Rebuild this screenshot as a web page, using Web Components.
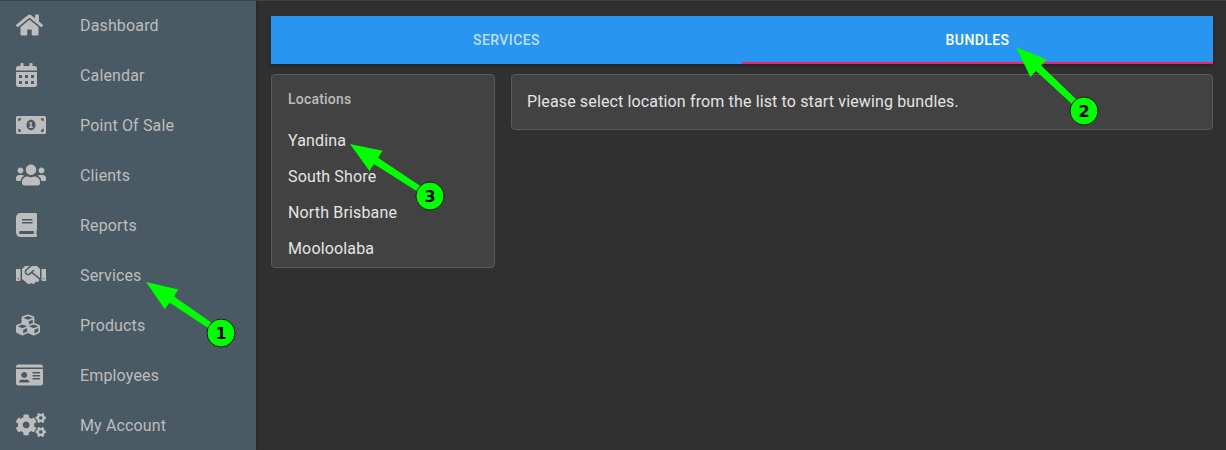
<!DOCTYPE html>
<html>
<head>
<meta charset="utf-8">
<title>Bundles</title>
<style>
  html, body { margin: 0; height: 100%; background: #303030; overflow: hidden; }
  body { font-family: Roboto, "Liberation Sans", sans-serif; }
</style>
</head>
<body>
<app-shell>
  <side-nav slot="nav">
    <nav-item icon="home">Dashboard</nav-item>
    <nav-item icon="calendar">Calendar</nav-item>
    <nav-item icon="money">Point Of Sale</nav-item>
    <nav-item icon="users">Clients</nav-item>
    <nav-item icon="book">Reports</nav-item>
    <nav-item icon="handshake">Services</nav-item>
    <nav-item icon="cubes">Products</nav-item>
    <nav-item icon="idcard">Employees</nav-item>
    <nav-item icon="cogs">My Account</nav-item>
  </side-nav>
  <tab-bar>
    <tab-item>SERVICES</tab-item>
    <tab-item active>BUNDLES</tab-item>
  </tab-bar>
  <div style="display:flex;gap:16px;align-items:flex-start">
    <location-list heading="Locations">
      <location-item>Yandina</location-item>
      <location-item>South Shore</location-item>
      <location-item>North Brisbane</location-item>
      <location-item>Mooloolaba</location-item>
    </location-list>
    <info-card>Please select location from the list to start viewing bundles.</info-card>
  </div>
</app-shell>
<note-arrow tip="146,282" end="221,333" label="1"></note-arrow>
<note-arrow tip="1016,47" end="1084,111" label="2"></note-arrow>
<note-arrow tip="350,144" end="430,196" label="3"></note-arrow>

<script>
const ICONS = {
    home: [576, 'M280.37 148.26L96 300.11V464a16 16 0 0 0 16 16l112.06-.29a16 16 0 0 0 15.92-16V368a16 16 0 0 1 16-16h64a16 16 0 0 1 16 16v95.64a16 16 0 0 0 16 16.05L464 480a16 16 0 0 0 16-16V300L295.67 148.26a12.19 12.19 0 0 0-15.3 0zM571.6 251.47L488 182.56V44.05a12 12 0 0 0-12-12h-56a12 12 0 0 0-12 12v72.61L318.47 43a48 48 0 0 0-61 0L4.34 251.47a12 12 0 0 0-1.6 16.9l25.5 31A12 12 0 0 0 45.15 301l235.22-193.74a12.19 12.19 0 0 1 15.3 0L530.9 301a12 12 0 0 0 16.9-1.6l25.5-31a12 12 0 0 0-1.7-16.93z'],
    calendar: [448, 'M0 464c0 26.5 21.5 48 48 48h352c26.5 0 48-21.5 48-48V192H0v272zm320-196c0-6.6 5.4-12 12-12h40c6.6 0 12 5.4 12 12v40c0 6.6-5.4 12-12 12h-40c-6.6 0-12-5.4-12-12v-40zm0 128c0-6.6 5.4-12 12-12h40c6.6 0 12 5.4 12 12v40c0 6.6-5.4 12-12 12h-40c-6.6 0-12-5.4-12-12v-40zM192 268c0-6.6 5.4-12 12-12h40c6.6 0 12 5.4 12 12v40c0 6.6-5.4 12-12 12h-40c-6.6 0-12-5.4-12-12v-40zm0 128c0-6.6 5.4-12 12-12h40c6.6 0 12 5.4 12 12v40c0 6.6-5.4 12-12 12h-40c-6.6 0-12-5.4-12-12v-40zM64 268c0-6.6 5.4-12 12-12h40c6.6 0 12 5.4 12 12v40c0 6.6-5.4 12-12 12H76c-6.6 0-12-5.4-12-12v-40zm0 128c0-6.6 5.4-12 12-12h40c6.6 0 12 5.4 12 12v40c0 6.6-5.4 12-12 12H76c-6.6 0-12-5.4-12-12v-40zM400 64h-48V16c0-8.8-7.2-16-16-16h-32c-8.8 0-16 7.2-16 16v48H160V16c0-8.8-7.2-16-16-16h-32c-8.8 0-16 7.2-16 16v48H48C21.5 64 0 85.5 0 112v48h448v-48c0-26.5-21.5-48-48-48z'],
    money: [640, 'M352 288h-16v-88c0-4.42-3.58-8-8-8h-13.58c-4.74 0-9.37 1.4-13.31 4.03l-15.33 10.22a7.994 7.994 0 0 0-2.22 11.09l8.88 13.31a7.994 7.994 0 0 0 11.09 2.22l.47-.31V288h-16c-4.42 0-8 3.58-8 8v16c0 4.42 3.58 8 8 8h64c4.42 0 8-3.58 8-8v-16c0-4.42-3.58-8-8-8zM608 64H32C14.33 64 0 78.33 0 96v320c0 17.67 14.33 32 32 32h576c17.67 0 32-14.33 32-32V96c0-17.67-14.33-32-32-32zM48 400v-64c35.35 0 64 28.65 64 64H48zm0-224v-64h64c0 35.35-28.65 64-64 64zm272 192c-53 0-96-50.15-96-112 0-61.86 43-112 96-112s96 50.14 96 112c0 61.87-43.01 112-96 112zm272 32h-64c0-35.35 28.65-64 64-64v64zm0-224c-35.35 0-64-28.65-64-64h64v64z'],
    users: [640, 'M96 224c35.3 0 64-28.7 64-64s-28.7-64-64-64-64 28.7-64 64 28.7 64 64 64zm448 0c35.3 0 64-28.7 64-64s-28.7-64-64-64-64 28.7-64 64 28.7 64 64 64zm32 32h-64c-17.6 0-33.5 7.1-45.1 18.6 40.3 22.1 68.9 62 75.1 109.4h66c17.7 0 32-14.3 32-32v-32c0-35.3-28.7-64-64-64zm-256 0c61.9 0 112-50.1 112-112S381.9 32 320 32 208 82.1 208 144s50.1 112 112 112zm76.8 32h-8.3c-20.8 10-43.9 16-68.5 16s-47.6-6-68.5-16h-8.3C179.6 288 128 339.6 128 403.2V432c0 26.5 21.5 48 48 48h288c26.5 0 48-21.5 48-48v-28.8c0-63.6-51.6-115.2-115.2-115.2zm-223.7-13.4C161.5 263.1 145.6 256 128 256H64c-35.3 0-64 28.7-64 64v32c0 17.7 14.3 32 32 32h65.9c6.3-47.4 34.9-87.3 75.2-109.4z'],
    book: [448, 'M448 360V24c0-13.3-10.7-24-24-24H96C43 0 0 43 0 96v320c0 53 43 96 96 96h328c13.3 0 24-10.7 24-24v-16c0-7.5-3.5-14.3-8.9-18.7-4.2-15.4-4.2-59.3 0-74.7 5.4-4.3 8.9-11.1 8.9-18.6zM128 134c0-3.3 2.7-6 6-6h212c3.3 0 6 2.7 6 6v20c0 3.3-2.7 6-6 6H134c-3.3 0-6-2.7-6-6v-20zm0 64c0-3.3 2.7-6 6-6h212c3.3 0 6 2.7 6 6v20c0 3.3-2.7 6-6 6H134c-3.3 0-6-2.7-6-6v-20zm253.4 250H96c-17.7 0-32-14.3-32-32 0-17.6 14.4-32 32-32h285.4c-1.9 17.1-1.9 46.9 0 64z'],
    handshake: [640, 'M434.7 64h-85.9c-8 0-15.7 3-21.6 8.4l-98.3 90c-.1.1-.2.3-.3.4-16.6 15.6-16.3 40.5-2.1 56 12.7 13.9 39.4 17.6 56.1 2.7.1-.1.3-.1.4-.2l79.9-73.2c6.5-5.9 16.7-5.5 22.6 1 6 6.5 5.5 16.6-1 22.6l-26.1 23.9L504 313.8c2.9 2.4 5.5 5 7.9 7.7V128l-54.6-54.6c-5.9-6-14.1-9.4-22.6-9.4zM544 128.2v223.9c0 17.7 14.3 32 32 32h64V128.2h-96zm48 223.9c-8.8 0-16-7.2-16-16s7.2-16 16-16 16 7.2 16 16-7.2 16-16 16zM0 384h64c17.7 0 32-14.3 32-32V128.2H0V384zm48-63.9c8.8 0 16 7.2 16 16s-7.2 16-16 16-16-7.2-16-16c0-8.9 7.2-16 16-16zm435.9 18.6L334.6 217.5l-30 27.5c-29.7 27.1-75.2 24.5-101.7-4.4-26.9-29.4-24.8-74.9 4.4-101.7L289.1 64h-83.8c-8.5 0-16.6 3.4-22.6 9.4L128 128v223.9h18.3l90.5 81.9c27.4 22.3 67.7 18.1 90-9.3l.2-.2 17.9 15.5c15.9 13 39.4 10.5 52.3-5.4l31.4-38.6 5.4 4.4c13.7 11.1 33.9 9.1 45-4.7l9.5-11.7c11.2-13.8 9.1-33.9-4.6-45.1z'],
    cubes: [512, 'M488.6 250.2L392 214V105.5c0-15-9.3-28.4-23.4-33.7l-100-37.5c-8.1-3.1-17.1-3.1-25.3 0l-100 37.5c-14.1 5.3-23.4 18.7-23.4 33.7V214l-96.6 36.2C9.3 255.5 0 268.9 0 283.9V394c0 13.6 7.7 26.1 19.9 32.2l100 50c10.1 5.1 22.1 5.1 32.2 0l103.9-52 103.9 52c10.1 5.1 22.1 5.1 32.2 0l100-50c12.2-6.1 19.9-18.6 19.9-32.2V283.9c0-15-9.3-28.4-23.4-33.7zM358 214.8l-85 31.9v-68.2l85-37v73.3zM154 104.1l102-38.2 102 38.2v.6l-102 41.4-102-41.4v-.6zm84 291.1l-85 42.5v-79.1l85-38.8v75.4zm0-112l-102 41.4-102-41.4v-.6l102-38.2 102 38.2v.6zm240 112l-85 42.5v-79.1l85-38.8v75.4zm0-112l-102 41.4-102-41.4v-.6l102-38.2 102 38.2v.6z'],
    idcard: [576, 'M528 32H48C21.5 32 0 53.5 0 80v16h576V80c0-26.5-21.5-48-48-48zM0 432c0 26.5 21.5 48 48 48h480c26.5 0 48-21.5 48-48V128H0v304zm352-232c0-4.4 3.6-8 8-8h144c4.4 0 8 3.6 8 8v16c0 4.4-3.6 8-8 8H360c-4.4 0-8-3.6-8-8v-16zm0 64c0-4.4 3.6-8 8-8h144c4.4 0 8 3.6 8 8v16c0 4.4-3.6 8-8 8H360c-4.4 0-8-3.6-8-8v-16zm0 64c0-4.4 3.6-8 8-8h144c4.4 0 8 3.6 8 8v16c0 4.4-3.6 8-8 8H360c-4.4 0-8-3.6-8-8v-16zM176 192c35.3 0 64 28.7 64 64s-28.7 64-64 64-64-28.7-64-64 28.7-64 64-64zM67.1 396.2C75.5 370.5 99.6 352 128 352h8.2c12.3 5.1 25.7 8 39.8 8s27.6-2.9 39.8-8h8.2c28.4 0 52.5 18.5 60.9 44.2 3.2 9.9-5.2 19.8-15.6 19.8H82.7c-10.4 0-18.8-10-15.6-19.8z'],
    cogs: [640, 'M512.1 191l-8.2 14.3c-3 5.3-9.4 7.5-15.1 5.4-11.8-4.4-22.6-10.7-32.1-18.6-4.6-3.8-5.8-10.5-2.8-15.7l8.2-14.3c-6.9-8-12.3-17.3-15.9-27.4h-16.5c-6 0-11.2-4.3-12.2-10.3-2-12-2.1-24.6 0-37.1 1-6 6.2-10.4 12.2-10.4h16.5c3.6-10.1 9-19.4 15.9-27.4l-8.2-14.3c-3-5.2-1.9-11.9 2.8-15.7 9.5-7.9 20.4-14.2 32.1-18.6 5.7-2.1 12.1.1 15.1 5.4l8.2 14.3c10.5-1.9 21.2-1.9 31.7 0L552 6.3c3-5.3 9.4-7.5 15.1-5.4 11.8 4.4 22.6 10.7 32.1 18.6 4.6 3.8 5.8 10.5 2.8 15.7l-8.2 14.3c6.9 8 12.3 17.3 15.9 27.4h16.5c6 0 11.2 4.3 12.2 10.3 2 12 2.1 24.6 0 37.1-1 6-6.2 10.4-12.2 10.4h-16.5c-3.6 10.1-9 19.4-15.9 27.4l8.2 14.3c3 5.2 1.9 11.9-2.8 15.7-9.5 7.9-20.4 14.2-32.1 18.6-5.7 2.1-12.1-.1-15.1-5.4l-8.2-14.3c-10.4 1.9-21.2 1.9-31.7 0zm-10.5-58.8c38.5 29.6 82.4-14.3 52.8-52.8-38.5-29.7-82.4 14.3-52.8 52.8zM386.3 286.1l33.7 16.8c10.1 5.8 14.5 18.1 10.5 29.1-8.9 24.2-26.4 46.4-42.6 65.8-7.4 8.9-20.2 11.1-30.3 5.3l-29.1-16.8c-16 13.7-34.6 24.6-54.9 31.7v33.6c0 11.6-8.3 21.6-19.7 23.6-24.6 4.2-50.4 4.4-75.9 0-11.5-2-20-11.9-20-23.6V418c-20.3-7.2-38.9-18-54.9-31.7L74 403c-10 5.8-22.9 3.6-30.3-5.3-16.2-19.4-33.3-41.6-42.2-65.7-4-10.9.4-23.2 10.5-29.1l33.3-16.8c-3.9-20.9-3.9-42.4 0-63.4L12 205.8c-10.1-5.8-14.6-18.1-10.5-29 8.9-24.2 26-46.4 42.2-65.8 7.4-8.9 20.2-11.1 30.3-5.3l29.1 16.8c16-13.7 34.6-24.6 54.9-31.7V57.1c0-11.5 8.2-21.5 19.6-23.5 24.6-4.2 50.5-4.4 76-.1 11.5 2 20 11.9 20 23.6v33.6c20.3 7.2 38.9 18 54.9 31.7l29.1-16.8c10-5.8 22.9-3.6 30.3 5.3 16.2 19.4 33.2 41.6 42.1 65.8 4 10.9.1 23.2-10 29.1l-33.7 16.8c3.9 21 3.9 42.5 0 63.5zm-117.6 21.1c59.2-77-28.7-164.9-105.7-105.7-59.2 77 28.7 164.9 105.7 105.7zm243.4 182.7l-8.2 14.3c-3 5.3-9.4 7.5-15.1 5.4-11.8-4.4-22.6-10.7-32.1-18.6-4.6-3.8-5.8-10.5-2.8-15.7l8.2-14.3c-6.9-8-12.3-17.3-15.9-27.4h-16.5c-6 0-11.2-4.3-12.2-10.3-2-12-2.1-24.6 0-37.1 1-6 6.2-10.4 12.2-10.4h16.5c3.6-10.1 9-19.4 15.9-27.4l-8.2-14.3c-3-5.2-1.9-11.9 2.8-15.7 9.5-7.9 20.4-14.2 32.1-18.6 5.7-2.1 12.1.1 15.1 5.4l8.2 14.3c10.5-1.9 21.2-1.9 31.7 0l8.2-14.3c3-5.3 9.4-7.5 15.1-5.4 11.8 4.4 22.6 10.7 32.1 18.6 4.6 3.8 5.8 10.5 2.8 15.7l-8.2 14.3c6.9 8 12.3 17.3 15.9 27.4h16.5c6 0 11.2 4.3 12.2 10.3 2 12 2.1 24.6 0 37.1-1 6-6.2 10.4-12.2 10.4h-16.5c-3.6 10.1-9 19.4-15.9 27.4l8.2 14.3c3 5.2 1.9 11.9-2.8 15.7-9.5 7.9-20.4 14.2-32.1 18.6-5.7 2.1-12.1-.1-15.1-5.4l-8.2-14.3c-10.4 1.9-21.2 1.9-31.7 0zM501.6 431c38.5 29.6 82.4-14.3 52.8-52.8-38.5-29.6-82.4 14.3-52.8 52.8z']
}

class AppShell extends HTMLElement {
    constructor() {
        super()
        this.attachShadow({ mode: 'open' }).innerHTML = `<style>
      :host { display: flex; height: 450px; position: relative; }
      :host::before { content: ''; position: absolute; left: 0; right: 0; top: 0; height: 1px; background: #3a4249; z-index: 1; }
      main { flex: 1; min-width: 0; display: flex; flex-direction: column; gap: 10px; padding: 16px 13px 0 15px; }
    </style>
    <slot name="nav"></slot>
    <main><slot></slot></main>`
    }
}

class SideNav extends HTMLElement {
    constructor() {
        super()
        this.attachShadow({ mode: 'open' }).innerHTML = `<style>
      :host { display: block; width: 256px; flex: none; background: #4a5a64; box-shadow: 0 0 4px rgba(0,0,0,.4); }
    </style>
    <slot></slot>`
    }
}

class NavItem extends HTMLElement {
    constructor() {
        super()
        const [w, d] = ICONS[this.getAttribute('icon')]
        this.attachShadow({ mode: 'open' }).innerHTML = `<style>
      :host { display: flex; align-items: center; height: 50px; padding-left: 16px; color: #bdbdbd; font-size: 16px; letter-spacing: .15px; }
      .icon { width: 64px; flex: none; display: flex; }
      svg { height: 24px; fill: currentColor; }
    </style>
    <span class="icon"><svg viewBox="0 0 ${w} 512"><path d="${d}"/></svg></span>
    <slot></slot>`
    }
}

class TabBar extends HTMLElement {
    constructor() {
        super()
        this.attachShadow({ mode: 'open' }).innerHTML = `<style>
      :host { display: flex; height: 48px; background: #2896f0; box-shadow: 0 2px 4px rgba(0,0,0,.3); }
    </style>
    <slot></slot>`
    }
}

class TabItem extends HTMLElement {
    constructor() {
        super()
        this.attachShadow({ mode: 'open' }).innerHTML = `<style>
      :host { flex: 1; display: flex; align-items: center; justify-content: center; box-sizing: border-box;
        font-size: 14px; font-weight: 500; letter-spacing: .4px; color: rgba(255,255,255,.7); }
      :host([active]) { color: #fff; box-shadow: inset 0 -2px 0 #f0246c; }
    </style>
    <slot></slot>`
    }
}

class LocationList extends HTMLElement {
    constructor() {
        super()
        this.attachShadow({ mode: 'open' }).innerHTML = `<style>
      :host { display: block; box-sizing: border-box; width: 224px; height: 194px; flex: none; padding: 0 16px;
        background: #424242; border: 1px solid #5a5a5a; border-radius: 4px; }
      h2 { margin: 0; padding: 16px 0 16px; font-size: 14px; line-height: 16px; font-weight: 500; letter-spacing: .2px; color: #bdbdbd; }
    </style>
    <h2>${this.getAttribute('heading')}</h2>
    <slot></slot>`
    }
}

class LocationItem extends HTMLElement {
    constructor() {
        super()
        this.attachShadow({ mode: 'open' }).innerHTML = `<style>
      :host { display: block; height: 36px; line-height: 36px; font-size: 16px; letter-spacing: .15px; color: #e4e4e4; }
    </style>
    <slot></slot>`
    }
}

class InfoCard extends HTMLElement {
    constructor() {
        super()
        this.attachShadow({ mode: 'open' }).innerHTML = `<style>
      :host { flex: 1; display: flex; align-items: center; box-sizing: border-box; height: 56px; padding: 0 15px 2px;
        background: #424242; border: 1px solid #5a5a5a; border-radius: 4px; font-size: 16px; letter-spacing: .14px; color: #e4e4e4; }
    </style>
    <slot></slot>`
    }
}

class NoteArrow extends HTMLElement {
    constructor() {
        super()
        const [tx, ty] = this.getAttribute('tip').split(',').map(Number)
        const [ex, ey] = this.getAttribute('end').split(',').map(Number)
        const len = Math.hypot(ex - tx, ey - ty)
        const ux = (ex - tx) / len
        const uy = (ey - ty) / len
        // point at distance a along the arrow and b to the side of it
        const pt = (a, b) => `${tx + ux * a - uy * b},${ty + uy * a + ux * b}`
        const points = [pt(0, 0), pt(31, 12), pt(31, 3.75), pt(len, 3), pt(len, -3), pt(31, -3.75), pt(31, -12)].join(' ')
        this.attachShadow({ mode: 'open' }).innerHTML = `<style>
      :host { position: absolute; left: 0; top: 0; width: 1226px; height: 450px; pointer-events: none; }
      svg { display: block; }
      text { font: bold 16px "DejaVu Sans", sans-serif; text-anchor: middle; }
    </style>
    <svg width="1226" height="450">
      <polygon points="${points}" fill="#00ff00"/>
      <circle cx="${ex}" cy="${ey}" r="14" fill="#00ff00" stroke="#1a1a1a"/>
      <text x="${ex}" y="${ey + 5.8}" fill="#000">${this.getAttribute('label')}</text>
    </svg>`
    }
}

customElements.define('app-shell', AppShell)
customElements.define('side-nav', SideNav)
customElements.define('nav-item', NavItem)
customElements.define('tab-bar', TabBar)
customElements.define('tab-item', TabItem)
customElements.define('location-list', LocationList)
customElements.define('location-item', LocationItem)
customElements.define('info-card', InfoCard)
customElements.define('note-arrow', NoteArrow)
</script>
</body>
</html>
